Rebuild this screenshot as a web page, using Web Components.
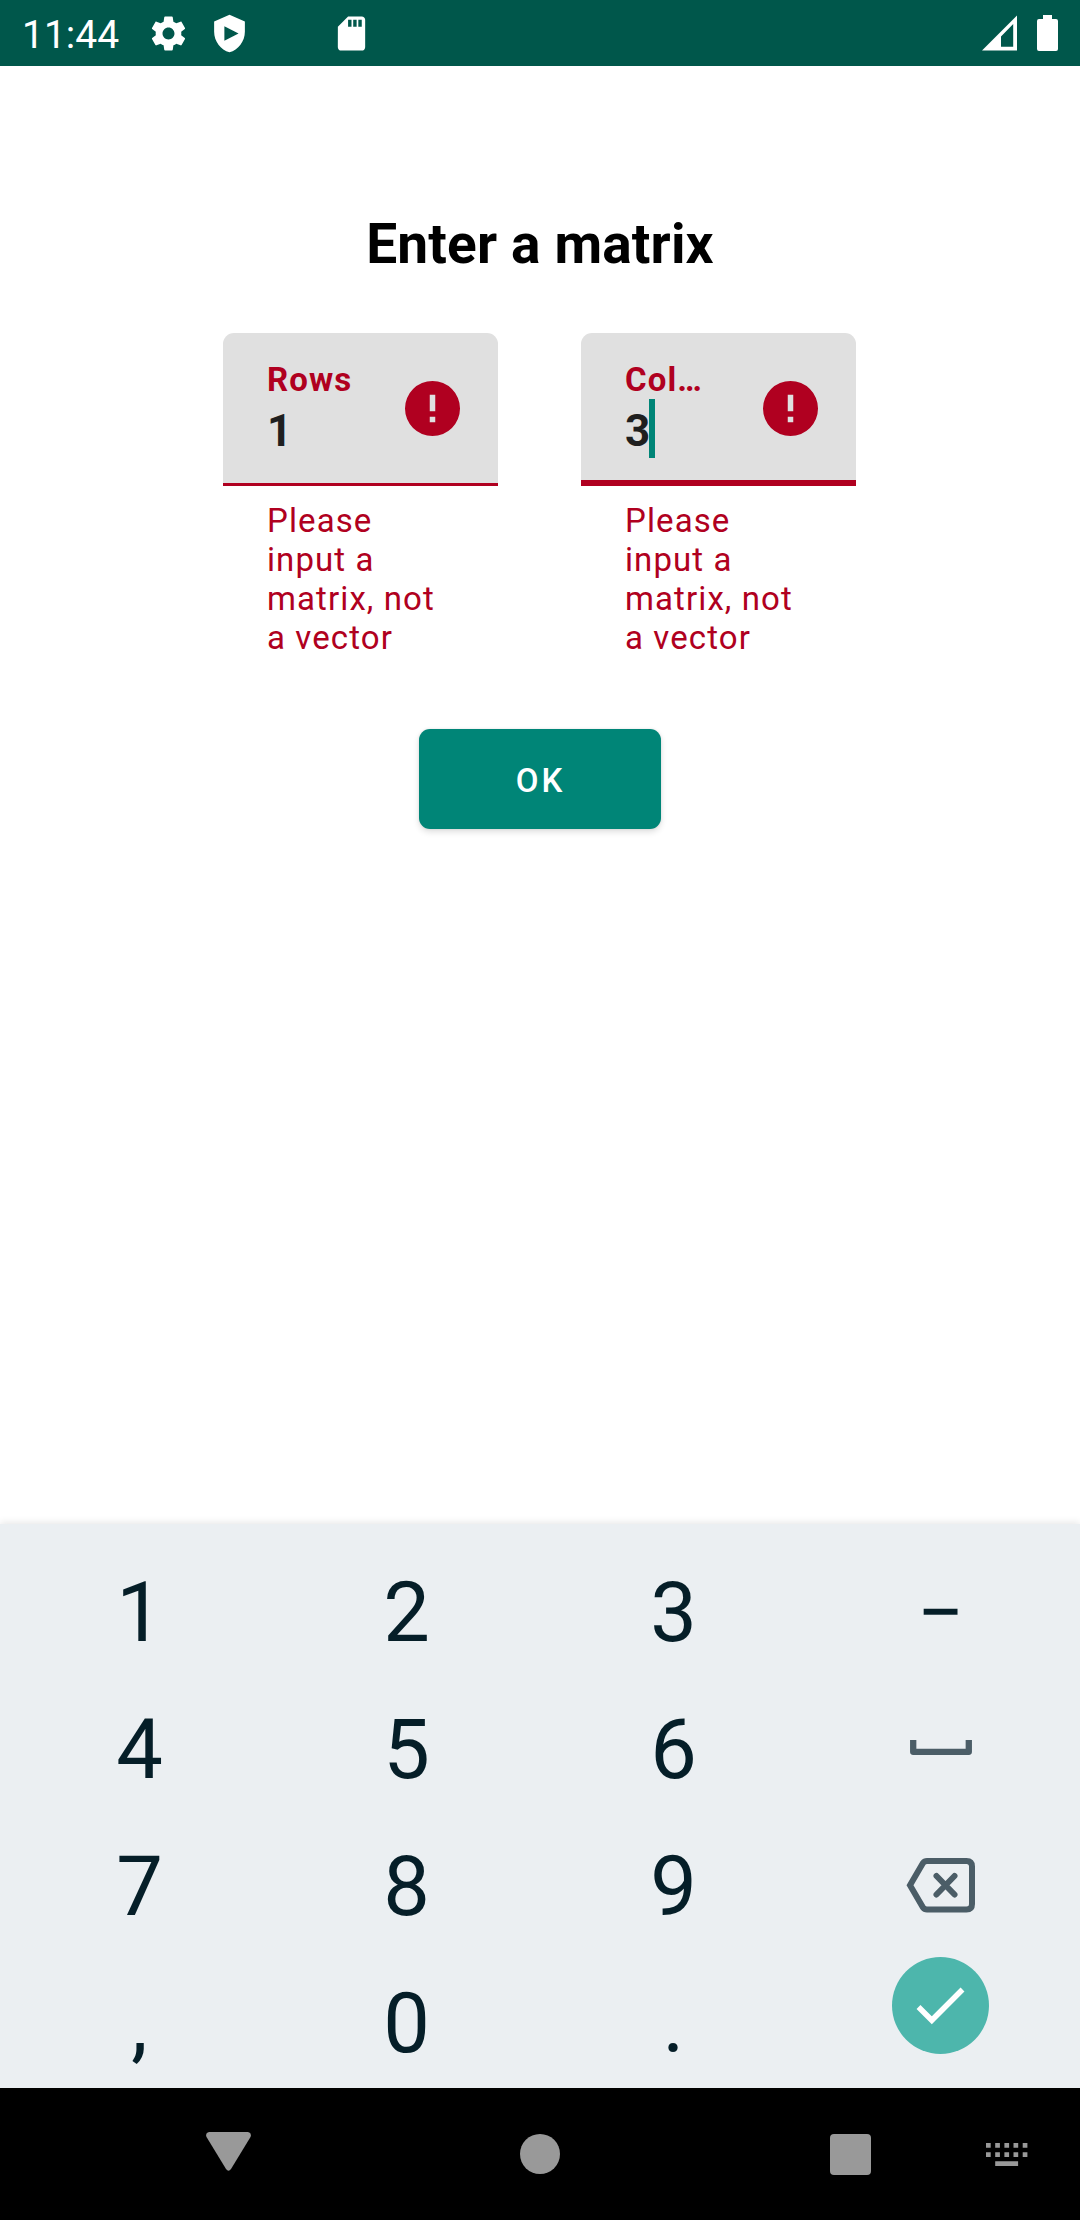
<!DOCTYPE html>
<html lang="en">
<head>
<meta charset="utf-8">
<title>Enter a matrix</title>
<style>
html,body{margin:0;padding:0;background:#fff}
body{width:1080px;height:2220px;overflow:hidden;font-family:Roboto,sans-serif}
</style>
</head>
<body>
<matrix-app></matrix-app>
<script>
const define=(name,html,setup)=>customElements.define(name,class extends HTMLElement{
  constructor(){
    super();
    const t=document.createElement('template');
    t.innerHTML=html;
    this.attachShadow({mode:'open'}).append(t.content.cloneNode(true));
  }
  connectedCallback(){ if(setup) setup(this,this.shadowRoot); }
});

define('status-bar',`<style>
:host{display:flex;height:66px;background:#00574b;color:#fff;align-items:center;box-sizing:border-box;padding-left:22px;padding-right:22px}
.time{font-size:39px;line-height:46px;width:126px;padding-top:3px;white-space:nowrap}
svg{display:block;fill:#fff;flex:none}
.shield{margin-left:20px}.sd{margin-left:81px}
.signal{margin-left:auto}.battery{margin-left:20px}
</style>
<span class="time">11:44</span>
<svg class="gear" width="41" height="41" viewBox="0 0 24 24"><path d="M19.43 12.98c.04-.32.07-.64.07-.98s-.03-.66-.07-.98l2.11-1.65c.19-.15.24-.42.12-.64l-2-3.46c-.12-.22-.39-.3-.61-.22l-2.49 1c-.52-.4-1.08-.73-1.69-.98l-.38-2.65C14.46 2.18 14.25 2 14 2h-4c-.25 0-.46.18-.49.42l-.38 2.65c-.61.25-1.17.59-1.69.98l-2.49-1c-.23-.09-.49 0-.61.22l-2 3.46c-.13.22-.07.49.12.64l2.11 1.65c-.04.32-.07.65-.07.98s.03.66.07.98l-2.11 1.65c-.19.15-.24.42-.12.64l2 3.46c.12.22.39.3.61.22l2.49-1c.52.4 1.08.73 1.69.98l.38 2.65c.03.24.24.42.49.42h4c.25 0 .46-.18.49-.42l.38-2.65c.61-.25 1.17-.59 1.69-.98l2.49 1c.23.09.49 0 .61-.22l2-3.46c.12-.22.07-.49-.12-.64l-2.11-1.65zM12 15.5c-1.93 0-3.500-1.570-3.500-3.500s1.570-3.500 3.500-3.500 3.500 1.570 3.500 3.500-1.570 3.500-3.500 3.500z"/></svg>
<svg class="shield" width="41" height="41" viewBox="0 0 24 24"><path fill-rule="evenodd" d="M12 1 3 5v6c0 5.55 3.84 10.74 9 12 5.16-1.26 9-6.45 9-12V5zM9 7.8l8.3 4.2L9 16.2z"/></svg>
<svg class="sd" width="41" height="41" viewBox="0 0 24 24"><path d="M18 2h-8L4.02 8 4 20c0 1.1.9 2 2 2h12c1.100 0 2-.9 2-2V4c0-1.100-.9-2-2-2zm-6 6h-2V4h2v4zm3 0h-2V4h2v4zm3 0h-2V4h2v4z"/></svg>
<svg class="signal" width="35" height="36" viewBox="0 0 35 36"><path fill-rule="evenodd" d="M0 35.5 35 .5v35zM19 21.5v10.2h12.2V9z"/></svg>
<svg class="battery" width="21" height="36" viewBox="0 0 21 36"><path d="M6 0h9v4h4q2 0 2 2v28q0 2-2 2H2q-2 0-2-2V6q0-2 2-2h4z"/></svg>`);

define('text-field',`<style>
:host{display:block;width:275px;color:#b00020}
.box{display:flex;justify-content:space-between;box-sizing:border-box;height:153px;background:#e0e0e0;border-radius:11px 11px 0 0;border-bottom:3px solid #b00020;padding:27px 38px 0 44px}
:host([focused]) .box{border-bottom-width:6px}
.text{display:flex;flex-direction:column;width:84px}
.label{font-size:33px;line-height:39px;font-weight:700;letter-spacing:1.1px;white-space:nowrap}
.value{display:flex;align-items:center;font-size:44px;line-height:54px;height:59px;font-weight:700;color:#1f1f1f}
.value span{padding-top:5px}
.caret{display:none;width:6px;height:59px;background:#008577;margin-left:-1px}
:host([focused]) .caret{display:block}
svg{display:block;margin-top:21px}
.help{font-size:33px;line-height:39px;letter-spacing:1.1px;padding:15px 44px 0}
</style>
<div class="box"><div class="text"><span class="label"></span><div class="value"><span><slot></slot></span><i class="caret"></i></div></div>
<svg width="55" height="55" viewBox="2 2 20 20"><path fill="#b00020" fill-rule="evenodd" d="M12 2a10 10 0 1 0 0 20 10 10 0 0 0 0-20zM11 7h2v6h-2zM11 15h2v2h-2z"/></svg></div>
<div class="help"></div>`,(h,r)=>{
  r.querySelector('.label').textContent=h.getAttribute('label');
  r.querySelector('.help').textContent=h.getAttribute('error');
});

define('action-button',`<style>
:host{display:flex;width:242px;height:100px;border-radius:11px;background:#008577;color:#fff;align-items:center;justify-content:center;font-size:33px;font-weight:500;letter-spacing:2.95px;box-shadow:0 3px 6px rgba(0,0,0,.13),0 0 3px rgba(0,0,0,.08)}
span{padding-left:1px;padding-top:3px}
</style><span><slot></slot></span>`);

define('matrix-form',`<style>
:host{display:flex;flex-direction:column;align-items:center;height:1458px;box-sizing:border-box;padding-top:146px}
h1{margin:0;font-size:55px;line-height:64px;font-weight:700;color:#000;white-space:nowrap;letter-spacing:.15px}
.row{display:flex;gap:83px;margin-top:57px;margin-right:1px}
action-button{margin-top:72px}
</style>
<h1>Enter a matrix</h1>
<div class="row"><text-field label="Rows" error="Please input a matrix, not a vector">1</text-field>
<text-field label="Col…" focused error="Please input a matrix, not a vector">3</text-field></div>
<action-button>OK</action-button>`);

define('pad-key',`<style>
:host{display:flex;align-items:center;justify-content:center;height:137px;box-sizing:border-box;padding-top:8px;font-size:83px;line-height:97px;color:#051e28}
::slotted(svg){display:block}
</style><slot></slot>`);

define('number-pad',`<style>
:host{display:grid;grid-template-columns:repeat(4,267px);grid-auto-rows:137px;height:564px;box-sizing:border-box;padding:16px 6px 0;background:#ebeff2;box-shadow:0 -2px 7px rgba(0,0,0,.09)}
.enter{padding-top:0;align-items:flex-start}
.space{padding-top:9px}
.del{padding-top:9px}
</style>
<pad-key>1</pad-key><pad-key>2</pad-key><pad-key>3</pad-key><pad-key>−</pad-key>
<pad-key>4</pad-key><pad-key>5</pad-key><pad-key>6</pad-key>
<pad-key class="space"><svg width="62" height="16" viewBox="0 0 62 16" style="margin-top:-6px"><path d="M3.2 1v11.800h55.600V1" fill="none" stroke="#4b5d67" stroke-width="6.300" stroke-linejoin="round"/></svg></pad-key>
<pad-key>7</pad-key><pad-key>8</pad-key><pad-key>9</pad-key>
<pad-key class="del"><svg width="70" height="56" viewBox="0 0 70 56" style="margin-top:-4px"><path d="M21 4H60.500q5.500 0 5.500 5.500V47q0 5.500-5.500 5.500H21q-2.500 0-4-2L4 28.200l13-22.200q1.500-2 4-2zM30.500 19l18 18.500M48.500 19l-18 18.500" fill="none" stroke="#4b5d67" stroke-width="6" stroke-linecap="round"/></svg></pad-key>
<pad-key>,</pad-key><pad-key>0</pad-key><pad-key>.</pad-key>
<pad-key class="enter"><svg width="97" height="97" viewBox="0 0 97 97" style="margin-top:6px"><circle cx="48.500" cy="48.500" r="48.500" fill="#4db6ac"/><path d="m26.500 50 13.300 13.300L70.500 32.500" fill="none" stroke="#fff" stroke-width="5.500"/></svg></pad-key>`);

define('nav-bar',`<style>
:host{display:flex;align-items:center;height:132px;background:#000;padding-left:206px}
svg{display:block;fill:#999;flex:none}
</style>
<svg width="45" height="39" viewBox="0 0 45 39" style="margin-top:-6px"><path d="M3 0h39q4 1 2.500 5L25 37q-2.500 3.500-5 0L.5 5Q-1 1 3 0z"/></svg>
<svg width="40" height="40" viewBox="0 0 40 40" style="margin-left:269px"><circle cx="20" cy="20" r="20"/></svg>
<svg width="41" height="41" viewBox="0 0 41 41" style="margin-left:270px;margin-top:1px"><rect width="41" height="41" rx="4"/></svg>
<svg width="42" height="23" viewBox="0 0 42 23" style="margin-left:115px;margin-top:1px"><path d="M0 0h4.700v4.700H0zM9.200 0h4.700v4.700H9.200zM18.400 0h4.700v4.700h-4.700zM27.500 0h4.700v4.700h-4.700zM36.700 0h4.700v4.700h-4.700zM0 9.200h4.700v4.700H0zM9.200 9.200h4.700v4.700H9.200zM18.400 9.200h4.700v4.700h-4.700zM27.500 9.200h4.700v4.700h-4.700zM36.700 9.200h4.700v4.700h-4.700zM9.200 18.300h22.900V23H9.200z"/></svg>`);

define('matrix-app',`<style>:host{display:flex;flex-direction:column;width:1080px;height:2220px;background:#fff}</style>
<status-bar></status-bar><matrix-form></matrix-form><number-pad></number-pad><nav-bar></nav-bar>`);
</script>
</body>
</html>
